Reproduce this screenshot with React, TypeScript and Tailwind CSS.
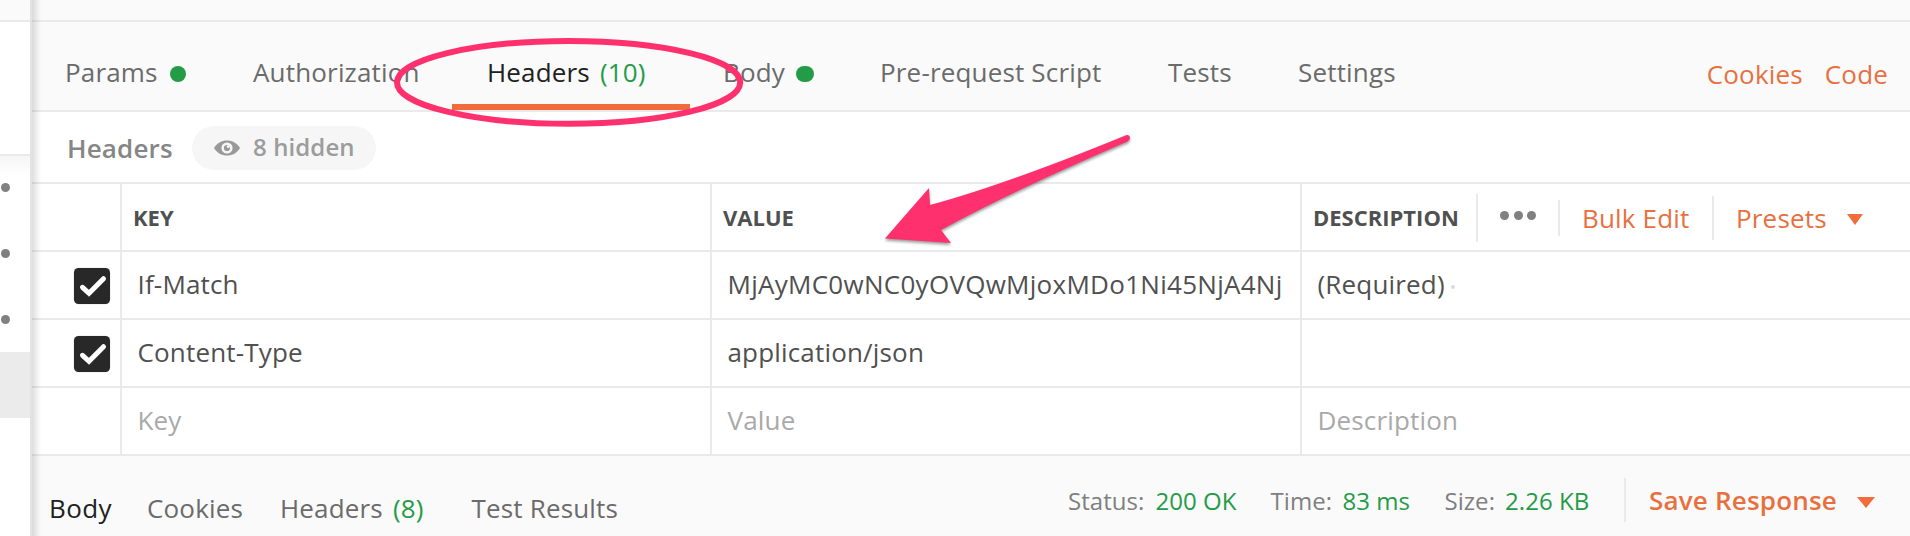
import type { ReactNode } from "react";

const GREEN_DOT = "shrink-0 rounded-full bg-[#249c47]";

function Label({ className, children }: { className: string; children: ReactNode }) {
  return <span className={"block shrink-0 whitespace-nowrap " + className}>{children}</span>;
}

function Sidebar() {
  return (
    <aside className="flex h-full w-8 shrink-0 flex-col border-r-2 border-[#e3e3e3] bg-white">
      <div className="h-[22px] shrink-0 border-b-2 border-[#eaeaea] bg-[#fafafa]" />
      <div className="h-[134px] shrink-0 border-b-2 border-[#eaeaea]" />
      <div className="flex h-[196px] shrink-0 flex-col gap-[57px] bg-[linear-gradient(#f5f5f5,#ffffff_20px)] pt-[26.5px] pl-[1px]">
        <i className="block size-[9px] rounded-full bg-[#808080]" />
        <i className="block size-[9px] rounded-full bg-[#808080]" />
        <i className="block size-[9px] rounded-full bg-[#808080]" />
      </div>
      <div className="h-[66px] shrink-0 bg-[#ebebeb]" />
    </aside>
  );
}

function RequestTabs() {
  return (
    <nav className="flex h-[90px] shrink-0 border-b-2 border-[#eaeaea] bg-[#fafafa] pl-[33px] leading-[52px] text-[#6b6b6b]">
      <div className="flex w-[188px] shrink-0 gap-[12px] pt-[24px]">
        <Label className="">Params</Label>
        <i className={GREEN_DOT + " mt-[20px] block size-4"} />
      </div>
      <div className="w-[199px] shrink-0 pt-[24px]">
        <Label className="">Authorization</Label>
      </div>
      <div className="flex h-[88px] w-[238px] shrink-0 gap-[10px] border-b-[6px] border-[#f26b3a] pt-[24px] pl-[35px] text-[#212121]">
        <Label className="">Headers</Label>
        <Label className="text-[#249c47]">(10)</Label>
      </div>
      <div className="flex w-[190px] shrink-0 gap-[11px] pt-[24px] pl-[33px]">
        <Label className="">Body</Label>
        <i className={GREEN_DOT + " mt-[20px] block h-4 w-[18px]"} />
      </div>
      <div className="w-[288px] shrink-0 pt-[24px]">
        <Label className="">Pre-request Script</Label>
      </div>
      <div className="w-[130px] shrink-0 pt-[24px]">
        <Label className="">Tests</Label>
      </div>
      <div className="grow pt-[24px]">
        <Label className="">Settings</Label>
      </div>
      <div className="flex shrink-0 gap-[22px] pt-[26px] pr-[22px] text-[#e8703f]">
        <Label className="">Cookies</Label>
        <Label className="">Code</Label>
      </div>
    </nav>
  );
}

function EyeIcon() {
  return (
    <svg className="mt-[14px] h-4 w-[26px] shrink-0" viewBox="0 0 26 16">
      <path d="M0 8C3 3 7.5 0.5 13 0.5S23 3 26 8C23 13 18.500 15.500 13 15.500S3 13 0 8Z" fill="#999" />
      <circle cx="13" cy="8" r="5.600" fill="#f6f6f6" />
      <circle cx="13" cy="8" r="3.100" fill="#999" />
      <circle cx="14.300" cy="6.500" r="1.500" fill="#f6f6f6" />
    </svg>
  );
}

function HeadersBar() {
  return (
    <div className="flex h-[72px] shrink-0 border-b-2 border-[#eaeaea] pl-[35px]">
      <Label className="w-[125px] pt-[10px] leading-[52px] font-semibold tracking-[0.15px] text-[#868686]">Headers</Label>
      <div className="mt-[14px] flex h-11 w-[184px] gap-[13px] rounded-full bg-[#f6f6f6] pl-[22px] text-[24px] leading-[42px] font-semibold tracking-[0.1px] text-[#9c9c9c]">
        <EyeIcon />
        <Label className="">8 hidden</Label>
      </div>
    </div>
  );
}

function Check() {
  return (
    <svg className="mt-[15px] ml-[41px] size-[38px]" viewBox="0 0 38 38">
      <rect x="0.500" y="0.500" width="37" height="37" rx="5.500" fill="#e6e6e6" />
      <rect x="1" y="1" width="36" height="36" rx="4.500" fill="#282828" />
      <path d="M9.500 20.300L16 26.300L30.500 11.700" fill="none" stroke="#fff" strokeWidth="5" strokeLinecap="round" />
    </svg>
  );
}

const COLS = "grid shrink-0 grid-cols-[90px_590px_590px_608px] border-b-2 border-[#eaeaea]";
const CELL = "border-r-2 border-[#eaeaea]";

interface RowProps {
  checked?: boolean;
  name: string;
  value: ReactNode;
  description?: ReactNode;
  color: string;
}

function Row({ checked, name, value, description, color }: RowProps) {
  return (
    <div className={COLS + " h-[68px] leading-[64px] " + color}>
      <div className={CELL}>{checked && <Check />}</div>
      <div className={CELL + " pl-[15.5px]"}>
        <Label className="">{name}</Label>
      </div>
      <div className={CELL + " pl-[15.5px]"}>
        <Label className="">{value}</Label>
      </div>
      <div className="pl-[15.5px]">{description}</div>
    </div>
  );
}

function Caret({ className }: { className: string }) {
  return (
    <svg className={"block shrink-0 " + className} viewBox="0 0 18 11" preserveAspectRatio="none">
      <path d="M0 0H18L9 11Z" fill="#f26b3a" />
    </svg>
  );
}

function TableHead() {
  return (
    <div className={COLS + " h-[68px] text-[22px] leading-[67px] font-bold text-[#505050]"}>
      <div className={CELL} />
      <div className={CELL + " pl-[11px]"}>
        <Label className="tracking-normal">KEY</Label>
      </div>
      <div className={CELL + " pl-[11px]"}>
        <Label className="tracking-normal">VALUE</Label>
      </div>
      <div className="flex pl-[11px]">
        <Label className="w-[163px] tracking-normal">DESCRIPTION</Label>
        <div className="mt-[10px] flex h-12 w-[82px] shrink-0 gap-[4.5px] border-l-2 border-[#eaeaea] pt-[17px] pl-[22px]">
          <i className="block size-[9px] rounded-full bg-[#808080]" />
          <i className="block size-[9px] rounded-full bg-[#808080]" />
          <i className="block size-[9px] rounded-full bg-[#808080]" />
        </div>
        <div className="mt-[16px] h-9 w-[154px] shrink-0 border-l-2 border-[#eaeaea] pl-[22px] text-[26px] leading-[36px] font-normal text-[#e8703f]">
          <Label className="">Bulk Edit</Label>
        </div>
        <div className="mt-[12px] flex h-11 shrink-0 border-l-2 border-[#eaeaea] pl-[22px] text-[26px] leading-[44px] font-normal text-[#e8703f]">
          <Label className="w-[111px]">Presets</Label>
          <Caret className="mt-[18px] h-[11px] w-4" />
        </div>
      </div>
    </div>
  );
}

function ResponseBar() {
  return (
    <footer className="flex h-20 shrink-0 bg-[#fafafa] pl-[17px] text-[#6b6b6b]">
      <div className="flex w-[1001px] shrink-0 pt-[26px] leading-[52px]">
        <Label className="w-[98px] tracking-[0.4px] text-[#212121]">Body</Label>
        <Label className="w-[133px]">Cookies</Label>
        <Label className="w-[113px]">Headers</Label>
        <Label className="w-[78.5px] text-[#249c47]">(8)</Label>
        <Label className="">Test Results</Label>
      </div>
      <div className="flex shrink-0 pt-[21px] pl-[18px] text-[24px] leading-[48px] tracking-[0.05px] text-[#808080]">
        <Label className="w-[87.5px]">Status:</Label>
        <Label className="w-[115px] text-[#249c47]">200 OK</Label>
        <Label className="w-[72px]">Time:</Label>
        <Label className="w-[102px] text-[#249c47]">83 ms</Label>
        <Label className="w-[60.5px]">Size:</Label>
        <Label className="w-[119px] text-[#249c47]">2.26 KB</Label>
      </div>
      <div className="mt-[22px] flex h-11 shrink-0 border-l-2 border-[#eaeaea] pl-[23px] leading-[44px] font-semibold text-[#e8703f]">
        <Label className="w-[208px] tracking-[0.2px]">Save Response</Label>
        <Caret className="mt-[19px] h-[11px] w-[18px]" />
      </div>
    </footer>
  );
}

function Annotations() {
  return (
    <svg className="pointer-events-none absolute inset-0 h-[536px] w-[1910px]" viewBox="0 0 1910 536">
      <ellipse cx="568.600" cy="82.400" rx="171.600" ry="41.400" fill="none" stroke="#ff306e" strokeWidth="6" />
      <path
        className="drop-shadow-[0_2px_1.500px_rgba(0,0,0,0.4)]"
        d="M885 238.500L929 188L930 205Q1007 184 1126 135.200C1130.500 134 1131.500 139.500 1127.500 141.500Q1010 192 941 230L951 243Z"
        fill="#ff306e"
      />
    </svg>
  );
}

export default function App() {
  return (
    <div className="relative flex h-[536px] w-[1910px] overflow-hidden bg-white font-['Open_Sans',sans-serif] text-[26px] tracking-[0.17px]">
      <Sidebar />
      <main className="flex w-[1878px] shrink-0 flex-col">
        <div className="h-[22px] shrink-0 border-b-2 border-[#eaeaea] bg-[#fafafa]" />
        <RequestTabs />
        <HeadersBar />
        <TableHead />
        <Row
          checked
          name="If-Match"
          value={<span className="tracking-[0.28px]">MjAyMC0wNC0yOVQwMjoxMDo1Ni45NjA4Nj</span>}
          color="text-[#505050]"
          description={
            <div className="flex gap-[6px]">
              <Label className="">(Required)</Label>
              <i className="mt-[33px] block size-1 rounded-full bg-[#dcdcdc]" />
            </div>
          }
        />
        <Row checked name="Content-Type" value="application/json" color="text-[#505050]" />
        <Row name="Key" value="Value" color="text-[#a9a9a9]" description={<Label className="">Description</Label>} />
        <ResponseBar />
      </main>
      <div className="pointer-events-none absolute top-0 left-8 h-full w-[9px] bg-[linear-gradient(90deg,rgba(0,0,0,0.13),rgba(0,0,0,0))]" />
      <Annotations />
    </div>
  );
}
